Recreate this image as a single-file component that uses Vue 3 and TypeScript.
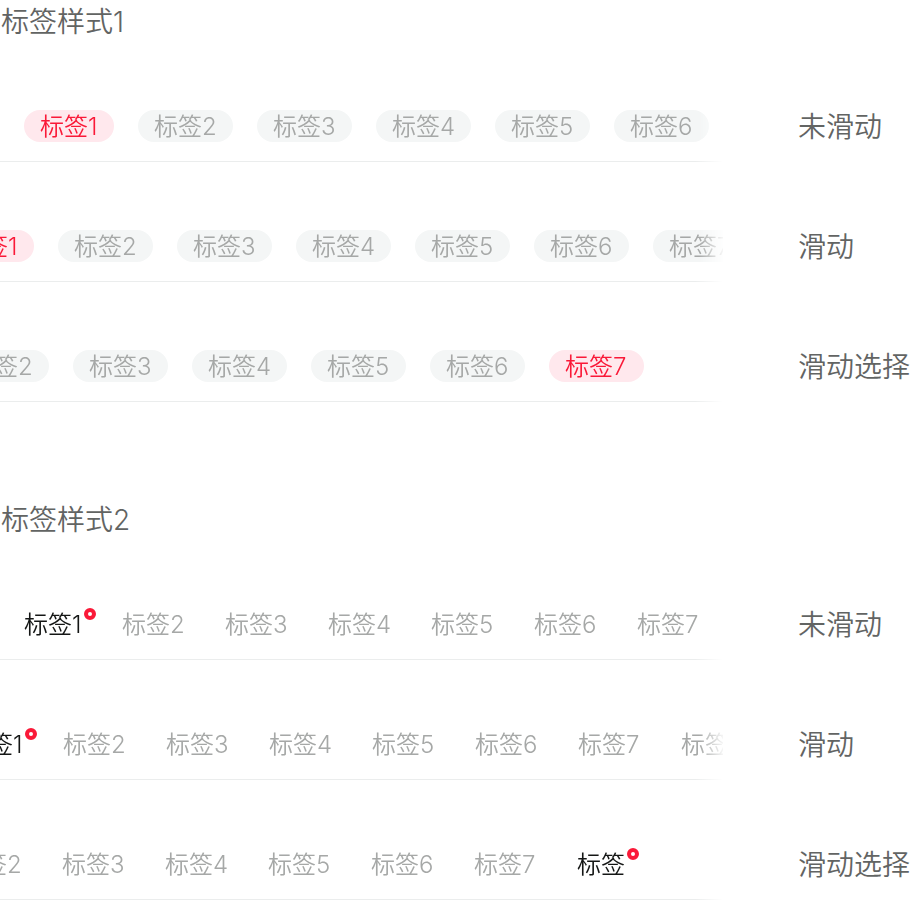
<script setup lang="ts">
import { onMounted, ref } from 'vue'

interface Strip {
  label: string
  tabs: string[]
  active: number
  scroll: number
}

interface Section {
  title: string
  variant: 'pill' | 'dot'
  strips: Strip[]
}

const numbered = Array.from({ length: 7 }, (_, i) => `标签${i + 1}`)
const extended = [...numbered, '标签']

const sections = ref<Section[]>([
  {
    title: '标签样式1',
    variant: 'pill',
    strips: [
      { label: '未滑动', tabs: numbered, active: 0, scroll: 0 },
      { label: '滑动', tabs: numbered, active: 0, scroll: 80 },
      { label: '滑动选择', tabs: numbered, active: 6, scroll: 184 },
    ],
  },
  {
    title: '标签样式2',
    variant: 'dot',
    strips: [
      { label: '未滑动', tabs: extended, active: 0, scroll: 0 },
      { label: '滑动', tabs: extended, active: 0, scroll: 59 },
      { label: '滑动选择', tabs: extended, active: 7, scroll: 163 },
    ],
  },
])

const root = ref<HTMLElement | null>(null)

onMounted(() => {
  const all = sections.value.flatMap((section) => section.strips)
  root.value?.querySelectorAll<HTMLElement>('.scroller').forEach((el, i) => {
    el.scrollLeft = all[i].scroll
  })
})
</script>

<template>
  <main ref="root" class="page">
    <section v-for="section in sections" :key="section.title" class="section">
      <h2 class="title">{{ section.title }}</h2>
      <div class="rows">
        <div v-for="strip in section.strips" :key="strip.label" class="row">
          <div class="strip">
            <div class="scroller" role="tablist">
              <div class="track" :class="section.variant">
                <button
                  v-for="(tab, i) in strip.tabs"
                  :key="tab"
                  type="button"
                  role="tab"
                  class="tab"
                  :class="{ active: i === strip.active }"
                  :aria-selected="i === strip.active"
                  @click="strip.active = i"
                >
                  {{ tab }}
                </button>
              </div>
            </div>
          </div>
          <p class="label">{{ strip.label }}</p>
        </div>
      </div>
    </section>
  </main>
</template>

<style>
body {
  margin: 0;
  background: #fff;
}
</style>

<style scoped>
.page {
  display: flex;
  flex-direction: column;
  gap: 96px;
  overflow: hidden;
  font-family: Inter, 'Noto Sans CJK SC', sans-serif;
  font-weight: 350;
  color: #626463;
}

.title {
  margin: 0 0 46px;
  padding-left: 1px;
  font-size: 28px;
  font-weight: inherit;
  line-height: 44px;
}

.rows {
  display: flex;
  flex-direction: column;
  gap: 48px;
}

.row {
  display: flex;
  align-items: center;
  gap: 75px;
}

.strip {
  flex: 1;
  min-width: 0;
  height: 72px;
  display: flex;
  flex-direction: column;
}

.strip::after {
  content: '';
  height: 1px;
  background: linear-gradient(to right, #ebeded calc(100% - 28px), transparent);
}

.scroller {
  flex: 1;
  overflow-x: auto;
  scrollbar-width: none;
  mask-image: linear-gradient(to right, #000 calc(100% - 24px), rgba(0, 0, 0, 0.1));
}

.track {
  display: flex;
  width: max-content;
  padding: 20px 120px 19px 24px;
}

.track.pill {
  gap: 24px;
}

.track.dot {
  gap: 40px;
}

.tab {
  position: relative;
  box-sizing: border-box;
  height: 32px;
  padding: 2px 0 0;
  border: 0;
  background: none;
  font: inherit;
  font-size: 24px;
  line-height: 30px;
  text-align: left;
  white-space: nowrap;
  color: #a6a8a7;
  cursor: pointer;
}

.pill .tab {
  min-width: 95px;
  padding: 2px 16px 0;
  border-radius: 16px;
  background: #f4f6f6;
}

.pill .tab:first-child {
  min-width: 90px;
}

.pill .tab.active {
  background: #ffe8ed;
  color: #fa1938;
}

.dot .tab {
  min-width: 63px;
}

.dot .tab:first-child {
  min-width: 58px;
}

.dot .tab:last-child {
  min-width: 48px;
}

.dot .tab.active {
  color: #141615;
}

.dot .tab.active::after {
  content: '';
  position: absolute;
  top: 0;
  left: calc(100% + 2px);
  box-sizing: border-box;
  width: 12px;
  height: 12px;
  border: 4px solid #fa1938;
  border-radius: 50%;
  background: #fff;
}

.label {
  flex: 0 0 112px;
  margin: 0;
  padding-top: 2px;
  font-size: 28px;
  line-height: 40px;
  white-space: nowrap;
}
</style>
